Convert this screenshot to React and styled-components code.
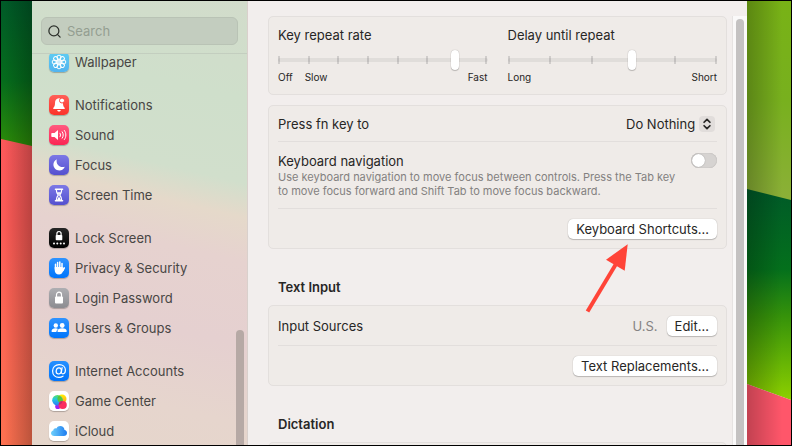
import React, { useState } from 'react';
import styled, { createGlobalStyle } from 'styled-components';
import { Search, ChevronsUpDown } from 'lucide-react';

/* ---------- sidebar icons, all on a 20x20 grid ---------- */

const petals = [0, 45, 90, 135, 180, 225, 270, 315];

const icons = {
    wallpaper: (
        <g fill="none" stroke="#fff" strokeWidth="1">
            {petals.map((angle) => (
                <circle key={angle} cx="10" cy="5.3" r="2.1" transform={`rotate(${angle} 10 10)`} />
            ))}
            <circle cx="10" cy="10" r="2.3" fill="#fff" fillOpacity=".7" />
        </g>
    ),
    notifications: (
        <g>
            <path fill="#fff" d="M10 3.2c-2.9.3-4 2.300-4 4.800 0 2.700-.6 3.700-1.600 4.700-.5.600-.2 1.300.600 1.300h10c.800 0 1.100-.7.600-1.300-1-1-1.600-2-1.600-4.700 0-2.500-1.200-4.500-4-4.800zM8.200 15h3.600c-.2 1-.9 1.500-1.800 1.500s-1.600-.5-1.800-1.500z" />
            <circle cx="13" cy="5.500" r="2.500" fill="#fff" stroke="#fb4a42" strokeWidth="1" />
        </g>
    ),
    sound: (
        <g>
            <path fill="#fff" d="M3 8h2.500l3.500-3v10l-3.500-3H3c-.4 0-.7-.3-.7-.7V8.700c0-.4.3-.7.7-.7z" />
            <path fill="none" stroke="#fff" strokeWidth="1" strokeLinecap="round" d="M11 8.200c.7 1 .7 2.600 0 3.600M13.200 6.800c1.400 1.900 1.400 4.500 0 6.400M15.400 5.500c2 2.700 2 6.300 0 9" />
        </g>
    ),
    focus: <path fill="#fff" d="M7.800 4.200C5.700 5.100 4.400 7.200 4.400 9.600c0 3.300 2.600 5.900 5.900 5.900 2.600 0 4.700-1.500 5.500-3.700-4.800 1.500-9.300-2.500-8-7.600z" />,
    screenTime: (
        <g fill="none" stroke="#fff">
            <path strokeWidth="1.600" strokeLinecap="round" d="M6.500 4.300h7M6.500 15.700h7" />
            <path strokeWidth="1.200" d="M7.300 4.500c0 3 .5 3.700 2 5.500-1.500 1.800-2 2.500-2 5.500M12.700 4.500c0 3-.5 3.700-2 5.500 1.500 1.800 2 2.500 2 5.500" />
            <path fill="#fff" stroke="none" d="M8.200 7.200h3.600L10 9.800zM10 11.500l2 3.500H8z" />
        </g>
    ),
    lockScreen: (
        <g>
            <rect x="6.700" y="7" width="6.600" height="5.200" rx=".8" fill="#fff" />
            <path fill="none" stroke="#fff" strokeWidth="1.200" d="M7.900 7.500V5.600c0-2.800 4.200-2.800 4.200 0v1.900" />
            <g fill="#fff">
                <circle cx="5" cy="15.500" r="1" />
                <circle cx="8.300" cy="15.500" r="1" />
                <circle cx="11.700" cy="15.500" r="1" />
                <circle cx="15" cy="15.500" r="1" />
            </g>
        </g>
    ),
    privacy: (
        <g stroke="#fff" strokeLinecap="round" fill="none">
            <path strokeWidth="1.500" d="M6.500 11V6.300M8.600 10V4.500M10.800 10V4M13 10.500V5.500" />
            <path strokeWidth="1.700" d="M13.800 12.500l1.400-2.600" />
            <path fill="#fff" stroke="none" d="M5.700 9h8.100v2l1.800-1-1.900 4c-.8 1.700-2 2.500-3.600 2.500-3 0-4.400-2-4.400-4.500z" />
        </g>
    ),
    login: (
        <g>
            <rect x="6" y="8.600" width="8" height="6.800" rx="1" fill="#fff" />
            <path fill="none" stroke="#fff" strokeWidth="1.200" d="M7.500 9V6.800c0-3.500 5-3.500 5 0V9" />
        </g>
    ),
    users: (
        <g fill="#fff">
            <circle cx="6.800" cy="7.500" r="2.200" />
            <circle cx="13.200" cy="7.500" r="2.400" />
            <path d="M2.500 13.300c0-1.800 1.700-3 4.100-3 1 0 1.800.2 2.400.6-1 .8-1.600 1.900-1.600 3.200H3.200c-.5 0-.7-.3-.7-.8zM8.400 13.300c0-1.800 2-3 4.800-3s4.600 1.200 4.600 3c0 .5-.3.800-.8.800H9.200c-.5 0-.8-.3-.8-.8z" />
        </g>
    ),
    internet: (
        <g fill="none" stroke="#fff" strokeLinecap="round">
            <path strokeWidth="1.200" d="M14 15.200c-1.200.8-2.500 1.200-4 1.200-3.900 0-6.400-2.600-6.400-6.400S6.300 3.600 10.200 3.600c3.700 0 6.200 2.300 6.200 5.500 0 2.300-1 3.700-2.500 3.700-1.200 0-1.700-.8-1.500-2l.7-4.100" />
            <ellipse cx="9.800" cy="9.900" rx="2.600" ry="3.100" strokeWidth="1.200" transform="rotate(12 9.800 9.900)" />
        </g>
    ),
    gameCenter: (
        <g>
            <defs>
                <linearGradient id="gcBlue" x1="0" y1="0" x2="0" y2="1">
                    <stop offset="0" stopColor="#5be05a" />
                    <stop offset=".4" stopColor="#22c8e0" />
                    <stop offset="1" stopColor="#2a7cf6" />
                </linearGradient>
                <linearGradient id="gcYellow" x1="0" y1="0" x2="0" y2="1">
                    <stop offset="0" stopColor="#fff000" />
                    <stop offset="1" stopColor="#ff9a20" />
                </linearGradient>
            </defs>
            <circle cx="8.800" cy="15.500" r="2.600" fill="#a020f0" />
            <circle cx="13" cy="8" r="4.500" fill="url(#gcYellow)" />
            <circle cx="8.500" cy="9.200" r="5.300" fill="url(#gcBlue)" />
            <path fill="#58c43a" d="M10 4.700c2.500 1 4 3 3.800 5.500-.1 1.300-.6 2.100-1.200 2.300-2.500-.5-4.300-2.500-4.200-4.700 0-1.200.6-2.400 1.600-3.100z" />
            <circle cx="13.700" cy="14" r="4.100" fill="#fb2c5f" />
            <path fill="#c02a6c" d="M9.600 13.800c.1-2 1.700-3.700 3.800-3.900-.1 2-1.500 3.800-3.800 3.900z" />
        </g>
    ),
    icloud: (
        <g>
            <defs>
                <linearGradient id="cloud" x1="0" y1="0" x2="1" y2="0">
                    <stop offset="0" stopColor="#6fd0fb" />
                    <stop offset="1" stopColor="#1d7cf0" />
                </linearGradient>
            </defs>
            <path fill="url(#cloud)" d="M5.300 15C3.400 15 2 13.800 2 12.200c0-1.400 1-2.400 2.300-2.700.1-1.600 1.600-2.600 3.200-2.100.8-1.500 2.100-2.300 3.700-2.300 2.300 0 4.100 1.600 4.300 4 1.500.3 2.500 1.400 2.500 2.900 0 1.700-1.400 3-3.200 3z" />
        </g>
    ),
};

const groups = [
    [{ label: 'Wallpaper', icon: 'wallpaper', from: '#5fcdf2', to: '#52b4ef' }],
    [
        { label: 'Notifications', icon: 'notifications', from: '#ff6058', to: '#fb3229' },
        { label: 'Sound', icon: 'sound', from: '#ff5a80', to: '#fb2553' },
        { label: 'Focus', icon: 'focus', from: '#7c78e6', to: '#5450cf' },
        { label: 'Screen Time', icon: 'screenTime', from: '#7c78e6', to: '#5450cf' },
    ],
    [
        { label: 'Lock Screen', icon: 'lockScreen', from: '#262626', to: '#000000' },
        { label: 'Privacy & Security', icon: 'privacy', from: '#2f93ff', to: '#0075fb' },
        { label: 'Login Password', icon: 'login', from: '#aeaeb2', to: '#8c8c91' },
        { label: 'Users & Groups', icon: 'users', from: '#2f93ff', to: '#0075fb' },
    ],
    [
        { label: 'Internet Accounts', icon: 'internet', from: '#2590ff', to: '#0073fa' },
        { label: 'Game Center', icon: 'gameCenter', from: '#ffffff', to: '#ffffff' },
        { label: 'iCloud', icon: 'icloud', from: '#ffffff', to: '#ffffff' },
    ],
];

// Wallpaper visible to the left of the window
function LeftWallpaper() {
    return (
        <Wallpaper viewBox="0 0 31 444" preserveAspectRatio="none" aria-hidden="true">
            <defs>
                <linearGradient id="leftGreen" x1="0" y1="0" x2="0" y2="1">
                    <stop offset="0" stopColor="#005a28" />
                    <stop offset=".55" stopColor="#056c1c" />
                    <stop offset="1" stopColor="#2c8c08" />
                </linearGradient>
                <linearGradient id="leftRed" x1="0" y1="0" x2="0" y2="1">
                    <stop offset="0" stopColor="#fc5560" />
                    <stop offset=".5" stopColor="#fb5a56" />
                    <stop offset="1" stopColor="#fd7150" />
                </linearGradient>
                <linearGradient id="leftShade">
                    <stop offset=".1" stopColor="#000" stopOpacity="0" />
                    <stop offset="1" stopColor="#000" stopOpacity=".26" />
                </linearGradient>
            </defs>
            <rect width="31" height="444" fill="url(#leftRed)" />
            <path d="M0 0h31v145L0 138z" fill="url(#leftGreen)" />
            <rect width="31" height="444" fill="url(#leftShade)" />
        </Wallpaper>
    );
}

// Wallpaper visible to the right of the window
function RightWallpaper() {
    return (
        <Wallpaper viewBox="0 0 44 444" preserveAspectRatio="none" aria-hidden="true">
            <defs>
                <linearGradient id="rightLime" x1="0" y1="0" x2="0" y2="1">
                    <stop offset="0" stopColor="#78b216" />
                    <stop offset=".5" stopColor="#78b01e" />
                    <stop offset="1" stopColor="#8cb038" />
                </linearGradient>
                <linearGradient id="rightGreen" x1="0" y1="0" x2="0" y2="1">
                    <stop offset="0" stopColor="#005a28" />
                    <stop offset=".38" stopColor="#04701c" />
                    <stop offset=".6" stopColor="#35920a" />
                    <stop offset="1" stopColor="#8dd000" />
                </linearGradient>
                <linearGradient id="rightShade">
                    <stop offset="0" stopColor="#000" stopOpacity=".24" />
                    <stop offset=".8" stopColor="#000" stopOpacity="0" />
                </linearGradient>
            </defs>
            <rect width="44" height="200" fill="url(#rightLime)" />
            <path d="M0 188l44 11v200L0 383z" fill="url(#rightGreen)" />
            <path d="M0 383l44 16v45H0z" fill="#ff566a" />
            <rect width="44" height="444" fill="url(#rightShade)" />
        </Wallpaper>
    );
}

function SliderField({ id, label, steps, value, marks }) {
    const [current, setCurrent] = useState(value);

    return (
        <Field>
            <label htmlFor={id}>{label}</label>
            <SliderBox>
                <Ticks>
                    {Array.from({ length: steps + 1 }, (_, i) => (
                        <Tick key={i} $hidden={i === current} />
                    ))}
                </Ticks>
                <Range
                    id={id}
                    type="range"
                    min="0"
                    max={steps}
                    value={current}
                    onChange={(e) => setCurrent(Number(e.target.value))}
                />
            </SliderBox>
            <Marks>
                {marks.map((mark) => (
                    <span key={mark}>{mark}</span>
                ))}
            </Marks>
        </Field>
    );
}

function App() {
    const [navigation, setNavigation] = useState(false);

    return (
        <>
            <GlobalStyle />
            <Desktop>
                <LeftWallpaper />
                <Window>
                    <Sidebar>
                        <SearchBar>
                            <SearchBox>
                                <Search size={15} strokeWidth={2} color="#2c302b" aria-hidden="true" />
                                <input type="search" placeholder="Search" aria-label="Search" />
                            </SearchBox>
                        </SearchBar>
                        <NavScroll>
                            <Nav>
                                {groups.map((group) => (
                                    <NavGroup key={group[0].label}>
                                        {group.map((item) => (
                                            <li key={item.label}>
                                                <NavLink href="#">
                                                    <NavIcon viewBox="0 0 20 20" $from={item.from} $to={item.to} aria-hidden="true">
                                                        {icons[item.icon]}
                                                    </NavIcon>
                                                    {item.label}
                                                </NavLink>
                                            </li>
                                        ))}
                                    </NavGroup>
                                ))}
                            </Nav>
                        </NavScroll>
                        <SidebarThumb />
                    </Sidebar>

                    <Content>
                        <Settings>
                            <SliderCard>
                                <SliderField id="repeat" label="Key repeat rate" steps={7} value={6} marks={['Off', 'Slow', 'Fast']} />
                                <SliderField id="delay" label="Delay until repeat" steps={5} value={3} marks={['Long', 'Short']} />
                            </SliderCard>

                            <Card>
                                <Row $height={35}>
                                    <label htmlFor="fn">Press fn key to</label>
                                    <SelectBox>
                                        <select id="fn" defaultValue="none">
                                            <option value="none">Do Nothing</option>
                                        </select>
                                        <Stepper>
                                            <ChevronsUpDown size={14} strokeWidth={3} aria-hidden="true" />
                                        </Stepper>
                                    </SelectBox>
                                </Row>
                                <Row $height={67} $top>
                                    <div>
                                        <label htmlFor="navigation">Keyboard navigation</label>
                                        <Hint>
                                            Use keyboard navigation to move focus between controls. Press the Tab key
                                            to move focus forward and Shift Tab to move focus backward.
                                        </Hint>
                                    </div>
                                    <Switch
                                        id="navigation"
                                        type="checkbox"
                                        role="switch"
                                        checked={navigation}
                                        onChange={(e) => setNavigation(e.target.checked)}
                                    />
                                </Row>
                                <Row $height={40} $end>
                                    <Callout>
                                        <Button>Keyboard Shortcuts…</Button>
                                        <Arrow viewBox="0 0 44 70" aria-hidden="true">
                                            <path d="M2.500 68.500L31 21" stroke="#ff4438" strokeWidth="4" />
                                            <path d="M42.700 1.300L21 16.700l18.700 11z" fill="#ff4438" />
                                        </Arrow>
                                    </Callout>
                                </Row>
                            </Card>

                            <Heading>Text Input</Heading>
                            <Card>
                                <Row $height={39}>
                                    <span>Input Sources</span>
                                    <Actions>
                                        <Muted>U.S.</Muted>
                                        <Button>Edit…</Button>
                                    </Actions>
                                </Row>
                                <Row $height={40} $end>
                                    <Button>Text Replacements…</Button>
                                </Row>
                            </Card>

                            <Heading>Dictation</Heading>
                            <Card>
                                <Row $height={40} />
                            </Card>
                        </Settings>
                        <ScrollTrack>
                            <ScrollThumb />
                        </ScrollTrack>
                    </Content>
                </Window>
                <RightWallpaper />
            </Desktop>
        </>
    );
}

const GlobalStyle = createGlobalStyle`
    * {
        box-sizing: border-box;
    }

    body {
        margin: 0;
        font-family: Inter, "Liberation Sans", sans-serif;
        font-size: 13px;
        line-height: 16px;
        color: #272625;
    }

    input, select, button {
        font: inherit;
        color: inherit;
        margin: 0;
    }
`;

const Desktop = styled.div`
    display: grid;
    grid-template-columns: 31px minmax(0, 1fr) 44px;
    height: 100vh;
    border: 1px solid #000;
    overflow: hidden;
`;

const Wallpaper = styled.svg`
    display: block;
    width: 100%;
    height: 100%;
    min-height: 0;
`;

const Window = styled.main`
    display: flex;
    min-height: 0;
    background: #f2eeed;
`;

/* ---------- sidebar ---------- */

const Sidebar = styled.aside`
    position: relative;
    display: flex;
    flex-direction: column;
    flex: none;
    width: 216px;
    border-right: 1px solid #d9d0cc;
    background: linear-gradient(193deg, #d2dccb 0%, #cfdfcb 20%, #d1dfcc 37%, #e5d9ca 44%, #e6d2cf 53%, #e5d0d0 70%, #e6d5cd 86%, #e5d6cb 100%);
`;

const SearchBar = styled.div`
    flex: none;
    padding: 16px 9px 8px;
    border-bottom: 1px solid #c3cebf;
`;

const SearchBox = styled.div`
    display: flex;
    align-items: center;
    gap: 5px;
    height: 28px;
    padding: 0 5px;
    border: 1px solid #b9c3b5;
    border-radius: 6px;
    background: #c3cdbf;

    input {
        flex: 1;
        min-width: 0;
        padding: 0;
        border: none;
        outline: none;
        background: transparent;
    }

    input::placeholder {
        color: #949e91;
    }
`;

const NavScroll = styled.div`
    flex: 1;
    min-height: 0;
    overflow: hidden;
`;

const Nav = styled.nav`
    display: flex;
    flex-direction: column;
    gap: 13px;
    margin-top: -7px; /* list is scrolled a little under the search bar */
    padding: 0 17px;
`;

const NavGroup = styled.ul`
    margin: 0;
    padding: 0;
    list-style: none;
`;

const NavLink = styled.a`
    display: flex;
    align-items: center;
    gap: 6px;
    height: 30px;
    color: #484644;
    text-decoration: none;
`;

const NavIcon = styled.svg`
    flex: none;
    width: 20px;
    height: 20px;
    border-radius: 5px;
    background: linear-gradient(${(p) => p.$from}, ${(p) => p.$to});
    box-shadow: 0 1px 1px rgba(0, 0, 0, 0.25);
`;

const SidebarThumb = styled.div`
    position: absolute;
    right: 3px;
    top: 329px;
    bottom: 0;
    width: 8px;
    border-radius: 4px 4px 0 0;
    background: #b6a9a5;
`;

/* ---------- settings pane ---------- */

const Content = styled.section`
    display: flex;
    flex: 1;
    gap: 5px;
    min-width: 0;
    padding: 15px 0 0 20px;
`;

const Settings = styled.div`
    flex: 1;
    min-width: 0;
`;

const Card = styled.div`
    padding: 0 9px;
    border: 1px solid #e3dfdd;
    border-radius: 5px;
    background: #efebe8;
`;

const SliderCard = styled(Card)`
    display: grid;
    grid-template-columns: 1fr 1fr;
    gap: 20px;
    margin-bottom: 10px;
    padding: 10px 9px;
`;

const Field = styled.div`
    display: flex;
    flex-direction: column;
`;

const SliderBox = styled.div`
    position: relative;
    height: 22px;
    margin-top: 6px;
`;

const Ticks = styled.div`
    position: absolute;
    inset: 0;
    display: flex;
    align-items: center;
    justify-content: space-between;
`;

const Tick = styled.i`
    width: 2px;
    height: 8px;
    background: #d0cdcb;
    visibility: ${(p) => (p.$hidden ? 'hidden' : 'visible')};
`;

const Range = styled.input`
    position: relative;
    display: block;
    width: 100%;
    height: 22px;
    appearance: none;
    background: transparent;

    &::-webkit-slider-runnable-track {
        height: 4px;
        border-radius: 2px;
        background: rgba(0, 0, 0, 0.06);
    }

    &::-webkit-slider-thumb {
        appearance: none;
        width: 8px;
        height: 20px;
        margin-top: -8px;
        border-radius: 4px;
        background: #fff;
        box-shadow: 0 0 1px rgba(0, 0, 0, 0.35), 0 1px 1px rgba(0, 0, 0, 0.2);
    }
`;

const Marks = styled.div`
    display: flex;
    gap: 12px;
    font-size: 10px;
    line-height: 13px;

    span:last-child {
        margin-left: auto;
    }
`;

const Row = styled.div`
    display: flex;
    align-items: ${(p) => (p.$top ? 'flex-start' : 'center')};
    justify-content: ${(p) => (p.$end ? 'flex-end' : 'space-between')};
    min-height: ${(p) => p.$height}px;
    padding: ${(p) => (p.$top ? '11px 0 10px' : '0')};

    & + & {
        border-top: 1px solid #e2dedc;
    }
`;

const Hint = styled.p`
    max-width: 410px;
    margin: 1px 0 0;
    font-size: 11px;
    line-height: 14px;
    color: #838180;
`;

const SelectBox = styled.div`
    position: relative;
    display: flex;
    align-items: center;

    select {
        padding: 0 21px 0 0;
        border: none;
        outline: none;
        appearance: none;
        background: transparent;
    }
`;

const Stepper = styled.span`
    position: absolute;
    right: 2px;
    display: grid;
    place-items: center;
    width: 16px;
    height: 16px;
    border-radius: 4px;
    background: #e1dddb;
    pointer-events: none;
`;

const Switch = styled.input`
    flex: none;
    display: flex;
    width: 26px;
    height: 15px;
    padding: 1px;
    appearance: none;
    border-radius: 8px;
    background: #d6d3d1;
    box-shadow: inset 0 0 1px rgba(0, 0, 0, 0.3);

    &::before {
        content: '';
        width: 13px;
        height: 13px;
        border-radius: 50%;
        background: #fff;
        box-shadow: 0 0 1px rgba(0, 0, 0, 0.4);
    }

    &:checked {
        justify-content: flex-end;
        background: #0a7aff;
    }
`;

const Button = styled.button`
    display: block;
    height: 20px;
    padding: 0 8px;
    border: none;
    border-radius: 5px;
    background: #fff;
    line-height: 20px;
    white-space: nowrap;
    box-shadow: 0 0 1px rgba(0, 0, 0, 0.3), 0 1px 1px rgba(0, 0, 0, 0.2);
`;

const Callout = styled.div`
    position: relative;
`;

const Arrow = styled.svg`
    position: absolute;
    top: 24px;
    right: 88px;
    width: 44px;
    height: 70px;
    pointer-events: none;
`;

const Actions = styled.div`
    display: flex;
    align-items: center;
    gap: 9px;
`;

const Muted = styled.span`
    color: #858382;
`;

const Heading = styled.h2`
    margin: 0;
    padding: 28px 10px 8px;
    font-size: 13px;
    font-weight: 600;
    line-height: 20px;
`;

const ScrollTrack = styled.div`
    flex: none;
    width: 15px;
    padding: 3px 3px 0;
    border-left: 1px solid #e6e3e2;
    background: #faf9f9;
`;

const ScrollThumb = styled.div`
    width: 8px;
    height: 100%;
    border-radius: 4px 4px 0 0;
    background: #c4c2c2;
`;

export default App;
